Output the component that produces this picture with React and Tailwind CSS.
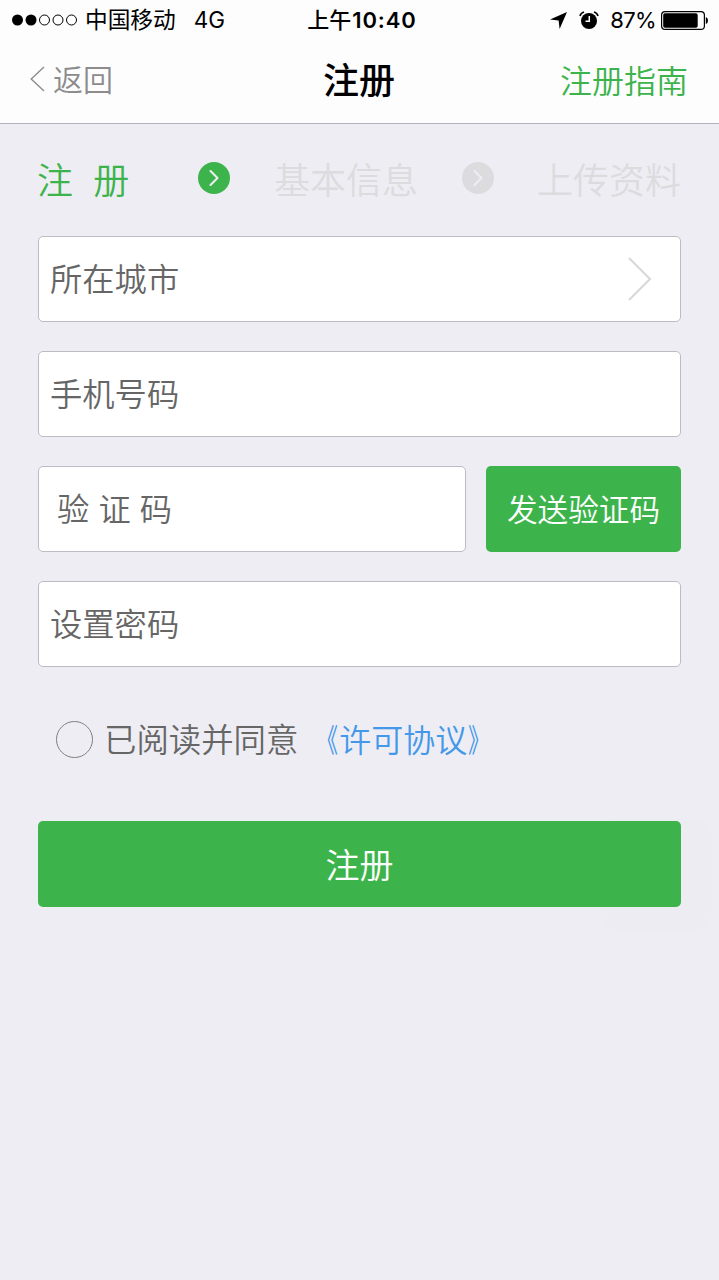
import { ChevronRight } from 'lucide-react';

const steps = ['注 册', '基本信息', '上传资料'];

function StatusBar() {
  return (
    <div className="grid h-10 grid-cols-[1fr_auto_1fr] items-center pl-3 pr-[11px] text-black">
      <div className="flex items-center">
        <svg width="66" height="12" viewBox="0 0 66 12">
          <circle cx="5.5" cy="6" r="5.5" />
          <circle cx="19" cy="6" r="5.5" />
          <g fill="none" stroke="black" strokeWidth="1">
            <circle cx="32.5" cy="6" r="5" />
            <circle cx="46" cy="6" r="5" />
            <circle cx="59.5" cy="6" r="5" />
          </g>
        </svg>
        <span className="ml-[7px] text-[22.7px] leading-none">中国移动</span>
        <span className="ml-[18px] text-[22.5px] leading-none">4G</span>
      </div>
      <div className="ml-[4px] text-[22px] leading-none font-medium">
        上午<span className="ml-[1px] font-semibold tracking-[0.9px]">10:40</span>
      </div>
      <div className="flex items-center justify-end">
        <svg width="17" height="17" viewBox="0 0 17 17">
          <path d="M17 0 L0 7.6 L8.6 8.4 L9.6 17 Z" />
        </svg>
        <svg className="ml-3" width="20" height="20" viewBox="0 0 20 20">
          <circle cx="10" cy="11" r="8" />
          <path d="M10.3 6v5.3H6.5" fill="none" stroke="white" strokeWidth="1.5" />
          <path d="M1 6Q1.7 3 5 1.9M19 6Q18.3 3 15 1.9" fill="none" stroke="black" strokeWidth="1.6" />
        </svg>
        <span className="ml-[11px] text-[22px] leading-none tracking-[-0.6px]">87%</span>
        <svg className="ml-[5px]" width="47" height="19" viewBox="0 0 47 19">
          <rect x="0.6" y="0.6" width="42.8" height="17.8" rx="3.5" fill="none" stroke="black" strokeWidth="1.2" />
          <rect x="2.2" y="2.2" width="34.5" height="14.6" rx="1.8" />
          <path d="M44.8 6Q47 6.6 47 9.5T44.8 13Z" />
        </svg>
      </div>
    </div>
  );
}

function NavBar() {
  return (
    <div className="grid h-[80px] grid-cols-3 items-center pl-[30px] pr-[31px] leading-none">
      <button className="flex items-center pb-[2px] text-[#8c8c8c]">
        <svg width="15" height="26" viewBox="0 0 15 26" fill="none" stroke="currentColor" strokeWidth="1.4">
          <path d="M14 1 L1.2 13 L14 25" />
        </svg>
        <span className="ml-2 pt-[2px] text-[30px] font-[350]">返回</span>
      </button>
      <h1 className="pt-[2px] text-center text-4xl leading-none font-medium text-black">注册</h1>
      <a className="pt-[3px] text-right text-[32px] font-[350] text-[#3cb44b]">注册指南</a>
    </div>
  );
}

function StepArrow({ active }) {
  return (
    <span className={`flex size-8 items-center justify-center rounded-full text-[#eeedf4] ${active ? 'bg-[#3cb44b]' : 'bg-[#dcdcde]'}`}>
      <ChevronRight size={28} strokeWidth={1.8} />
    </span>
  );
}

function Steps() {
  return (
    <div className="flex h-[70px] items-center justify-between text-4xl leading-none font-[350] text-[#dcdcde]">
      <span className="-ml-[1px] mr-[25px] pt-[5px] text-[#3cb44b] [word-spacing:10px]">{steps[0]}</span>
      <StepArrow active />
      <span className="ml-[1px] pt-[5px]">{steps[1]}</span>
      <StepArrow />
      <span className="pt-[5px]">{steps[2]}</span>
    </div>
  );
}

function Field({ placeholder, className = 'px-[11px]', type = 'text' }) {
  return (
    <input
      type={type}
      placeholder={placeholder}
      className={`h-[86px] w-full min-w-0 rounded-[5px] border border-[#bdbcc4] bg-white text-[32.3px] font-[350] placeholder:text-[#666] ${className}`}
    />
  );
}

export default function App() {
  return (
    <div className="relative min-h-screen bg-[#eeedf4] font-[Inter,'Noto_Sans_CJK_SC',sans-serif]">
      <header className="h-[124px] border-b border-[#b3b2ba] bg-[#fdfdfe]">
        <StatusBar />
        <NavBar />
      </header>

      <main className="px-[38px] pt-[19px]">
        <Steps />

        <form className="mt-[23px] flex flex-col gap-[29.1px]">
          <button
            type="button"
            className="flex h-[86px] items-center justify-between rounded-[5px] border border-[#bdbcc4] bg-white pl-[11px] pr-7 text-[32.3px] leading-none font-[350] text-[#666]"
          >
            <span className="pt-[2px]">所在城市</span>
            <svg width="24" height="44" viewBox="0 0 24 44" fill="none" stroke="#d8d8d8" strokeWidth="2">
              <path d="M1 1 L22 22 L1 43" />
            </svg>
          </button>
          <Field placeholder="手机号码" />
          <div className="flex gap-5">
            <Field placeholder="验 证 码" className="px-[18px]" />
            <button type="button" className="h-[86px] w-[195px] shrink-0 rounded-[5px] bg-[#3cb44b] pt-[2px] text-[30.6px] leading-none font-[350] text-white">
              发送验证码
            </button>
          </div>
          <Field placeholder="设置密码" type="password" />
        </form>

        <div className="mt-[52px] flex h-10 items-center pl-[18px] text-[32.4px] leading-none font-[350] text-[#666]">
          <span className="size-[37px] rounded-full border-[1.5px] border-[#808080]" />
          <span className="ml-[11px] pt-[3px]">已阅读并同意</span>
          <a className="ml-[9px] flex items-center pt-[3px] text-[32px] text-[#4498ea]">
            <span className="-ml-[1px] mr-[1px] inline-block origin-right scale-x-[0.68] font-normal">《</span>
            许可协议
            <span className="ml-[1px] inline-block origin-left scale-x-[0.68] font-normal">》</span>
          </a>
        </div>

        <button className="mt-[62px] h-[86px] w-full rounded-[5px] bg-[#3cb44b] pt-[3px] text-[34px] leading-none font-[350] text-white">
          注册
        </button>
      </main>

      {/* idle floating touch button */}
      <div className="pointer-events-none absolute top-[818px] right-[7px] size-[112px] rounded-[20px] bg-[#808080]/[0.01]" />
    </div>
  );
}
